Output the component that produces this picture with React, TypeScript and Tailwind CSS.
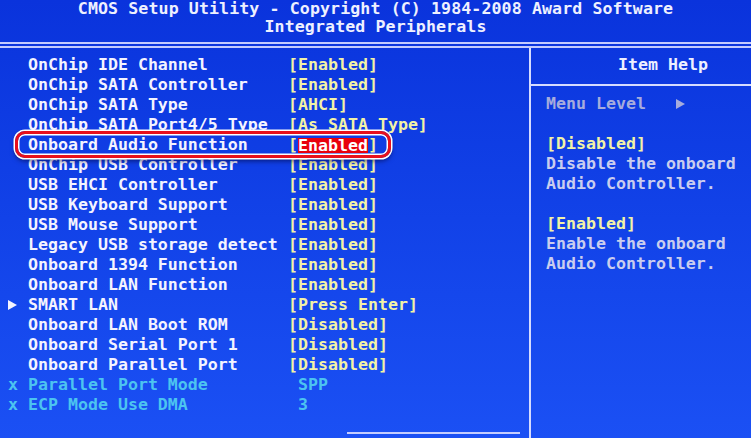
type Row = {
  name: string
  value: string
  kind?: 'normal' | 'sub' | 'off' | 'selected'
}

const rows: Row[] = [
  { name: 'OnChip IDE Channel', value: '[Enabled]' },
  { name: 'OnChip SATA Controller', value: '[Enabled]' },
  { name: 'OnChip SATA Type', value: '[AHCI]' },
  { name: 'OnChip SATA Port4/5 Type', value: '[As SATA Type]' },
  { name: 'Onboard Audio Function', value: 'Enabled', kind: 'selected' },
  { name: 'OnChip USB Controller', value: '[Enabled]' },
  { name: 'USB EHCI Controller', value: '[Enabled]' },
  { name: 'USB Keyboard Support', value: '[Enabled]' },
  { name: 'USB Mouse Support', value: '[Enabled]' },
  { name: 'Legacy USB storage detect', value: '[Enabled]' },
  { name: 'Onboard 1394 Function', value: '[Enabled]' },
  { name: 'Onboard LAN Function', value: '[Enabled]' },
  { name: 'SMART LAN', value: '[Press Enter]', kind: 'sub' },
  { name: 'Onboard LAN Boot ROM', value: '[Disabled]' },
  { name: 'Onboard Serial Port 1', value: '[Disabled]' },
  { name: 'Onboard Parallel Port', value: '[Disabled]' },
  { name: 'Parallel Port Mode', value: ' SPP', kind: 'off' },
  { name: 'ECP Mode Use DMA', value: ' 3', kind: 'off' },
]

function Triangle({ className }: { className?: string }) {
  return (
    <svg width="9" height="10" viewBox="0 0 9 10" className={className}>
      <path d="M0 0 L9 5 L0 10 Z" fill="currentColor" />
    </svg>
  )
}

function SetupRow({ row }: { row: Row }) {
  const off = row.kind === 'off'
  return (
    <div className="flex h-[20px] items-center whitespace-pre">
      <span className="flex w-[20px] items-center">
        {row.kind === 'sub' && <Triangle className="text-[#f4f4ff]" />}
        {off && <span className="text-[#4cc4f0]">x</span>}
      </span>
      <span className={`w-[260px] ${off ? 'text-[#4cc4f0]' : 'text-[#f4f4ff]'}`}>{row.name}</span>
      {row.kind === 'selected' ? (
        <span className="flex items-center text-[#f2f2a6]">
          [
          <span className="inline-block h-[15px] bg-[#e8000e] leading-[15px] text-white">{row.value}</span>]
        </span>
      ) : (
        <span className={off ? 'text-[#4cc4f0]' : 'text-[#f2f2a6]'}>{row.value}</span>
      )}
    </div>
  )
}

export default function App() {
  return (
    <div className="relative h-[438px] w-[751px] overflow-hidden bg-gradient-to-b from-[#0a33dc] to-[#1b50f4] font-['DejaVu_Sans_Mono',monospace] text-[16.6px] font-bold leading-[20px]">
      {/* Title */}
      <div className="text-center leading-[18px] tracking-[0.1px] text-[#eef0ff]">
        <div className="h-[18px]">CMOS Setup Utility - Copyright (C) 1984-2008 Award Software</div>
        <div className="h-[18px]">Integrated Peripherals</div>
      </div>

      <div className="mt-[6px] h-[6px] border-y-2 border-[#c4ccff]" />

      <div className="flex h-[390px]">
        {/* Settings */}
        <div className="flex w-[529px] flex-col pl-[8px] pt-[7px]">
          {rows.map(row => (
            <SetupRow key={row.name} row={row} />
          ))}
          <div className="mb-[4px] ml-[339px] mt-auto h-[2px] w-[173px] bg-[#c4ccff]" />
        </div>

        <div className="w-[2px] bg-[#d6dcff]" />

        {/* Item help */}
        <div className="flex-1 pt-[7px]">
          <div className="h-[20px] whitespace-pre pl-[87px] text-[#eef0ff]">Item Help</div>
          <div className="mt-[9px] h-[2px] bg-[#d6dcff]" />
          <div className="mt-[8px] whitespace-pre pl-[15px]">
            <div className="flex h-[20px] items-center text-[#a6acdc]">
              <span>Menu Level</span>
              <Triangle className="ml-[30px] text-[#a6acdc]" />
            </div>
            <div className="h-[20px]" />
            <div className="h-[20px] text-[#f2f2a6]">[Disabled]</div>
            <div className="h-[20px] text-[#c9cdee]">Disable the onboard</div>
            <div className="h-[20px] text-[#c9cdee]">Audio Controller.</div>
            <div className="h-[20px]" />
            <div className="h-[20px] text-[#f2f2a6]">[Enabled]</div>
            <div className="h-[20px] text-[#c9cdee]">Enable the onboard</div>
            <div className="h-[20px] text-[#c9cdee]">Audio Controller.</div>
          </div>
        </div>
      </div>

      {/* Red annotation around the selected row */}
      <div className="pointer-events-none absolute left-[15px] top-[131px] h-[27px] w-[376px] rounded-[10px] border-[3px] border-[#e8101c] shadow-[0_0_0_1.5px_#ffffff,inset_0_0_0_1.5px_#ffffff,0_3px_5px_rgba(0,0,50,0.6)]" />
    </div>
  )
}
